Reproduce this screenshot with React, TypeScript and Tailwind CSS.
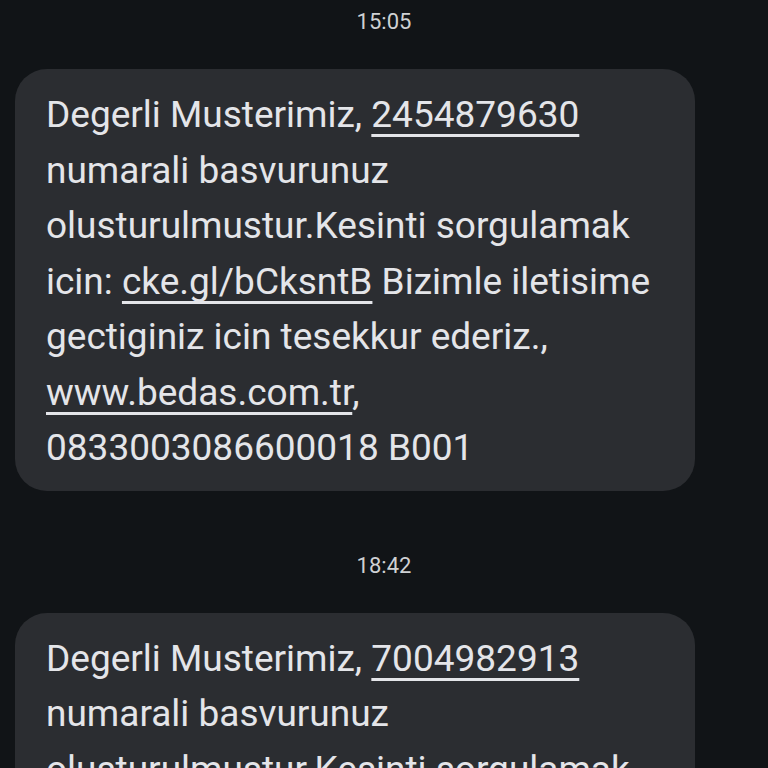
const messages = [
  {
    time: '15:05',
    lines: [
      [{ t: 'Degerli Musterimiz, ' }, { t: '2454879630', link: true }],
      [{ t: 'numarali basvurunuz' }],
      [{ t: 'olusturulmustur.Kesinti sorgulamak' }],
      [{ t: 'icin: ' }, { t: 'cke.gl/bCksntB', link: true }, { t: ' Bizimle iletisime' }],
      [{ t: 'gectiginiz icin tesekkur ederiz.,' }],
      [{ t: 'www.bedas.com.tr', link: true }, { t: ',' }],
      [{ t: '0833003086600018 B001' }],
    ],
  },
  {
    time: '18:42',
    lines: [
      [{ t: 'Degerli Musterimiz, ' }, { t: '7004982913', link: true }],
      [{ t: 'numarali basvurunuz' }],
      [{ t: 'olusturulmustur.Kesinti sorgulamak' }],
      [{ t: 'icin: ' }, { t: 'cke.gl/bCksntB', link: true }, { t: ' Bizimle iletisime' }],
    ],
  },
];

export default function App() {
  return (
    <div className="h-[768px] w-[768px] overflow-hidden bg-[#111417] font-['Roboto',sans-serif] text-[#e4e5e9]">
      {messages.map((m) => (
        <div key={m.time} className="flex flex-col">
          <div className="pt-[9px] pb-[34px] text-center text-[22px] leading-[26px] text-[#cfd1d4]">{m.time}</div>
          <div className="ml-[15px] w-[680px] rounded-[32px] bg-[#2b2d31] pl-[31px] pt-[18px] pb-[15px] text-[37px] leading-[55.5px]">
            {m.lines.map((line, i) => (
              <div key={i} className="whitespace-pre">
                {line.map((s, j) =>
                  s.link ? (
                    <span key={j} className="underline decoration-[3px] underline-offset-[7px] [text-decoration-skip-ink:none]">{s.t}</span>
                  ) : (
                    <span key={j}>{s.t}</span>
                  )
                )}
              </div>
            ))}
          </div>
          <div className="h-[53px]" />
        </div>
      ))}
    </div>
  );
}
